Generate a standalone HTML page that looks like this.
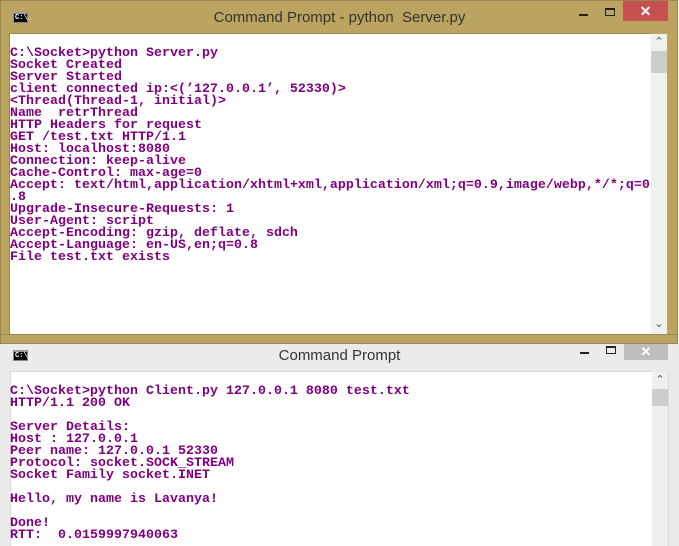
<!DOCTYPE html>
<html><head><style>
*{margin:0;padding:0;box-sizing:border-box}
body{width:679px;height:546px;overflow:hidden;background:#fff;position:relative;font-family:"Liberation Sans",sans-serif}
.abs{position:absolute}
pre{font-family:"Liberation Mono",monospace;font-weight:bold;font-size:13.33px;line-height:12px;color:#800080;white-space:pre;letter-spacing:0}
.icon{width:15px;height:11px;background:#000;border:1px solid #888;border-top:2px solid #999}
.icon span{color:#fff;font-size:7px;font-family:"Liberation Mono",monospace;position:absolute;left:1px;top:0;font-weight:bold}
</style></head><body>
<div class="abs" style="left:0;top:0;width:678px;height:344px;background:#bba460;border:1px solid #9a8650"></div>
<div class="abs icon" style="left:13px;top:12px"><span>C:\_</span></div>
<div class="abs" style="left:0;top:9px;width:679px;text-align:center;font-size:15px;color:#333">Command Prompt - python&nbsp; Server.py</div>
<div class="abs" style="left:579px;top:14px;width:9px;height:2px;background:#222"></div>
<div class="abs" style="left:605px;top:8px;width:10px;height:8px;border:1px solid #222;border-top:2px solid #222"></div>
<div class="abs" style="left:623px;top:1px;width:45px;height:20px;background:#c75050;color:#fff;text-align:center;font-size:14px;line-height:20px;font-weight:bold">✕</div>
<div class="abs" style="left:9px;top:33px;width:642px;height:301px;background:#fff;border-top:1px solid #9a8650;border-left:1px solid #9a8650"></div>
<div class="abs" style="left:651px;top:34px;width:16px;height:300px;background:#f0f0f0"></div>
<div class="abs" style="left:651px;top:51px;width:16px;height:22px;background:#cdcdcd"></div>
<div class="abs" style="left:651px;top:34px;width:16px;height:16px;color:#555;font-size:11px;text-align:center;line-height:16px">⌃</div>
<div class="abs" style="left:651px;top:318px;width:16px;height:16px;color:#555;font-size:11px;text-align:center;line-height:12px">⌄</div>
<div class="abs" style="left:0;top:334px;width:678px;height:1px;background:#9a8650"></div>
<pre class="abs" style="left:10px;top:48px">C:\Socket&gt;python Server.py
Socket Created
Server Started
client connected ip:&lt;(’127.0.0.1’, 52330)&gt;
&lt;Thread(Thread-1, initial)&gt;
Name  retrThread
HTTP Headers for request
GET /test.txt HTTP/1.1
Host: localhost:8080
Connection: keep-alive
Cache-Control: max-age=0
Accept: text/html,application/xhtml+xml,application/xml;q=0.9,image/webp,*/*;q=0
.8
Upgrade-Insecure-Requests: 1
User-Agent: script
Accept-Encoding: gzip, deflate, sdch
Accept-Language: en-US,en;q=0.8
File test.txt exists</pre>
<div class="abs" style="left:0;top:344px;width:679px;height:202px;background:#ebebeb"></div>
<div class="abs icon" style="left:13px;top:350px"><span>C:\_</span></div>
<div class="abs" style="left:0;top:347px;width:679px;text-align:center;font-size:15px;color:#333">Command Prompt</div>
<div class="abs" style="left:580px;top:352px;width:9px;height:2px;background:#222"></div>
<div class="abs" style="left:606px;top:346px;width:10px;height:8px;border:1px solid #222;border-top:2px solid #222"></div>
<div class="abs" style="left:624px;top:344px;width:44px;height:16px;background:#bdbdbd;color:#fff;text-align:center;font-size:13px;line-height:16px;font-weight:bold">✕</div>
<div class="abs" style="left:10px;top:371px;width:642px;height:175px;background:#fff;border-top:1px solid #d8d8d8;border-left:1px solid #d8d8d8"></div>
<div class="abs" style="left:652px;top:372px;width:16px;height:174px;background:#efefef"></div>
<div class="abs" style="left:652px;top:389px;width:16px;height:17px;background:#cdcdcd"></div>
<div class="abs" style="left:652px;top:372px;width:16px;height:16px;color:#555;font-size:11px;text-align:center;line-height:16px">⌃</div>
<div class="abs" style="left:668px;top:372px;width:1px;height:174px;background:#d8d8d8"></div>
<pre class="abs" style="left:10px;top:386px">C:\Socket&gt;python Client.py 127.0.0.1 8080 test.txt
HTTP/1.1 200 OK

Server Details:
Host : 127.0.0.1
Peer name: 127.0.0.1 52330
Protocol: socket.SOCK_STREAM
Socket Family socket.INET

Hello, my name is Lavanya!

Done!
RTT:  0.0159997940063</pre>
</body></html>
